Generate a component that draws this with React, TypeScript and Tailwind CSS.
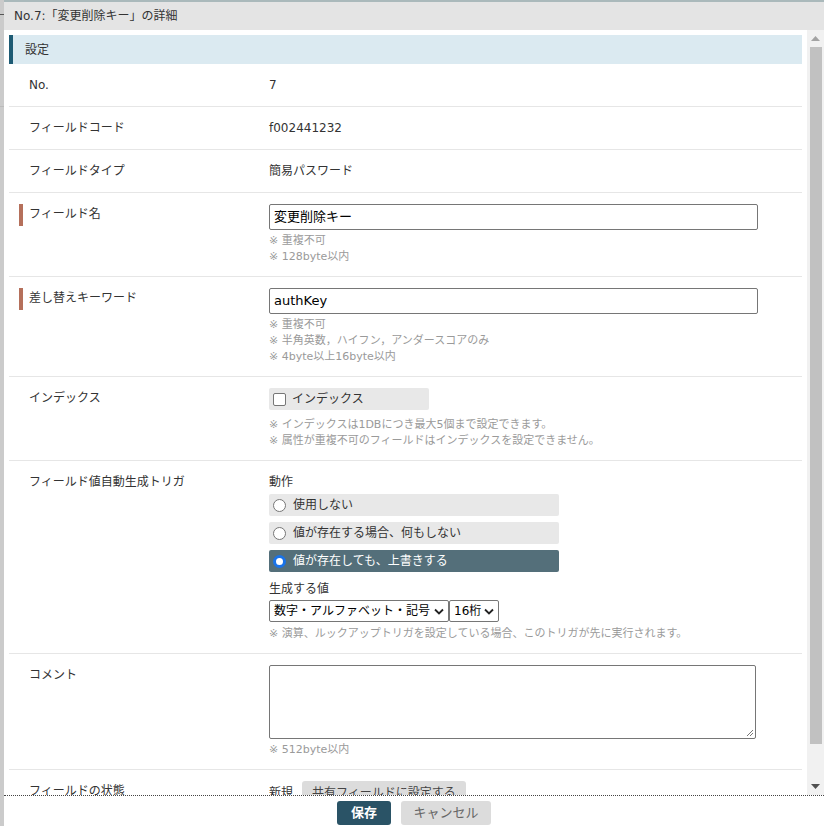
import React from 'react'

const font = { fontFamily: '"DejaVu Sans", "Noto Sans CJK JP", sans-serif' }

const Note: React.FC<{ lines: string[] }> = ({ lines }) => (
    <div className="text-[11px] leading-[16px] text-[#9a9a9a]">
        {lines.map((l) => (
            <div key={l}>※ {l}</div>
        ))}
    </div>
)

interface RowProps {
    label: string
    required?: boolean
    children: React.ReactNode
}

const Row: React.FC<RowProps> = ({ label, required, children }) => (
    <div className="flex border-b border-[#e6e6e6] pt-[11px] pb-[11px]">
        <div className="flex w-[260px] shrink-0 items-start pl-[10px]">
            <span className={`w-[4px] shrink-0 ${required ? 'h-[22px] bg-[#b5705b]' : 'h-[20px]'}`} />
            <span className="ml-[6px] text-[12px] leading-[20px] text-[#333]">{label}</span>
        </div>
        <div className="min-w-0 flex-1 text-[12px] leading-[20px] text-[#333]">{children}</div>
    </div>
)

const TextInput: React.FC<{ value: string }> = ({ value }) => (
    <div className="flex h-[26px] w-[489px] items-center rounded-[2px] border border-[#767676] bg-white px-[4px] text-[13px] text-black">
        {value}
    </div>
)

const Radio: React.FC<{ label: string; checked?: boolean }> = ({ label, checked }) => (
    <div
        className={`flex h-[22px] w-[290px] items-center gap-[7px] rounded-[2px] px-[4px] text-[12px] ${
            checked ? 'bg-[#546f7a] text-white' : 'bg-[#e8e8e8] text-[#333]'
        }`}
    >
        {checked ? (
            <span className="h-[13px] w-[13px] rounded-full border-[3px] border-[#1a73e8] bg-white" />
        ) : (
            <span className="h-[13px] w-[13px] rounded-full border border-[#767676] bg-white" />
        )}
        {label}
    </div>
)

const Chevron = () => (
    <svg width="10" height="7" viewBox="0 0 10 7" className="shrink-0">
        <path d="M1 1.5 L5 5.5 L9 1.5" fill="none" stroke="#222" strokeWidth="1.8" />
    </svg>
)

const Select: React.FC<{ value: string; width: string }> = ({ value, width }) => (
    <div
        className={`flex h-[22px] ${width} items-center justify-between rounded-[2px] border border-[#767676] bg-white pl-[4px] pr-[4px] text-[12px] text-black`}
    >
        <span>{value}</span>
        <Chevron />
    </div>
)

export default function App() {
    return (
        <div className="flex h-[826px] w-[824px] overflow-hidden bg-white" style={font}>
            <div className="relative w-[4px] shrink-0 bg-[#cbcbcb]">
                <div className="absolute left-0 top-[14px] h-[1px] w-[4px] bg-[#555]" />
                <div className="absolute left-0 top-[106px] h-[1px] w-[4px] bg-[#bbb]" />
            </div>
            <div className="flex min-w-0 flex-1 flex-col">
                <div className="h-[2px] bg-[#aab9bb]" />
                <div className="flex h-[28px] items-center bg-[#e4e4e4] pl-[10px] text-[12px] text-[#333]">
                    No.7:「変更削除キー」の詳細
                </div>
                <div className="flex min-h-0 flex-1">
                    <div className="min-w-0 flex-1 overflow-hidden px-[5px] pt-[5px]">
                        <div className="flex h-[29px] items-center border-l-[4px] border-[#1d5b74] bg-[#dbeaf1] pl-[12px] text-[12px] text-[#333]">
                            設定
                        </div>
                        <Row label="No.">7</Row>
                        <Row label="フィールドコード">f002441232</Row>
                        <Row label="フィールドタイプ">簡易パスワード</Row>
                        <Row label="フィールド名" required>
                            <TextInput value="変更削除キー" />
                            <div className="mt-[3px]">
                                <Note lines={['重複不可', '128byte以内']} />
                            </div>
                        </Row>
                        <Row label="差し替えキーワード" required>
                            <TextInput value="authKey" />
                            <div className="mt-[3px]">
                                <Note lines={['重複不可', '半角英数，ハイフン，アンダースコアのみ', '4byte以上16byte以内']} />
                            </div>
                        </Row>
                        <Row label="インデックス">
                            <div className="flex h-[22px] w-[160px] items-center gap-[6px] rounded-[2px] bg-[#e8e8e8] px-[4px] text-[12px]">
                                <span className="h-[13px] w-[13px] rounded-[2px] border border-[#767676] bg-white" />
                                インデックス
                            </div>
                            <div className="mt-[7px]">
                                <Note
                                    lines={[
                                        'インデックスは1DBにつき最大5個まで設定できます。',
                                        '属性が重複不可のフィールドはインデックスを設定できません。',
                                    ]}
                                />
                            </div>
                        </Row>
                        <Row label="フィールド値自動生成トリガ">
                            <div>動作</div>
                            <div className="mt-[2px] flex flex-col gap-[6px]">
                                <Radio label="使用しない" />
                                <Radio label="値が存在する場合、何もしない" />
                                <Radio label="値が存在しても、上書きする" checked />
                            </div>
                            <div className="mt-[7px]">生成する値</div>
                            <div className="mt-[1px] flex">
                                <Select value="数字・アルファベット・記号" width="w-[180px]" />
                                <Select value="16桁" width="w-[50px]" />
                            </div>
                            <div className="mt-[4px]">
                                <Note lines={['演算、ルックアップトリガを設定している場合、このトリガが先に実行されます。']} />
                            </div>
                        </Row>
                        <Row label="コメント">
                            <div className="relative h-[74px] w-[487px] rounded-[2px] border border-[#767676] bg-white">
                                <svg width="9" height="9" viewBox="0 0 9 9" className="absolute bottom-[1px] right-[1px]">
                                    <path d="M8 2 L2 8 M8 5 L5 8" stroke="#777" strokeWidth="1" />
                                </svg>
                            </div>
                            <div className="mt-[3px]">
                                <Note lines={['512byte以内']} />
                            </div>
                        </Row>
                        <Row label="フィールドの状態">
                            <div className="flex items-center gap-[9px]">
                                <span>新規</span>
                                <span className="flex h-[24px] items-center rounded-[3px] bg-[#dcdcdc] px-[10px] text-[#444]">
                                    共有フィールドに設定する
                                </span>
                            </div>
                        </Row>
                    </div>
                    <div className="flex w-[17px] shrink-0 flex-col items-center bg-[#f1f1f1]">
                        <svg width="9" height="5" viewBox="0 0 9 5" className="mt-[6px]">
                            <path d="M4.5 0 L9 5 L0 5 Z" fill="#a3a3a3" />
                        </svg>
                        <div className="mt-[6px] h-[697px] w-[12px] bg-[#c1c1c1]" />
                        <div className="flex-1" />
                        <svg width="9" height="5" viewBox="0 0 9 5" className="mb-[6px]">
                            <path d="M0 0 L9 0 L4.5 5 Z" fill="#505050" />
                        </svg>
                    </div>
                </div>
                <div className="flex h-[31px] shrink-0 items-start justify-center gap-[10px] border-t border-dotted border-[#444] bg-white pt-[5px]">
                    <button className="h-[24px] w-[54px] rounded-[3px] bg-[#2a5366] text-[13px] font-bold text-white">
                        保存
                    </button>
                    <button className="h-[24px] w-[90px] rounded-[3px] bg-[#dcdcdc] text-[13px] text-[#666]">
                        キャンセル
                    </button>
                </div>
            </div>
        </div>
    )
}
